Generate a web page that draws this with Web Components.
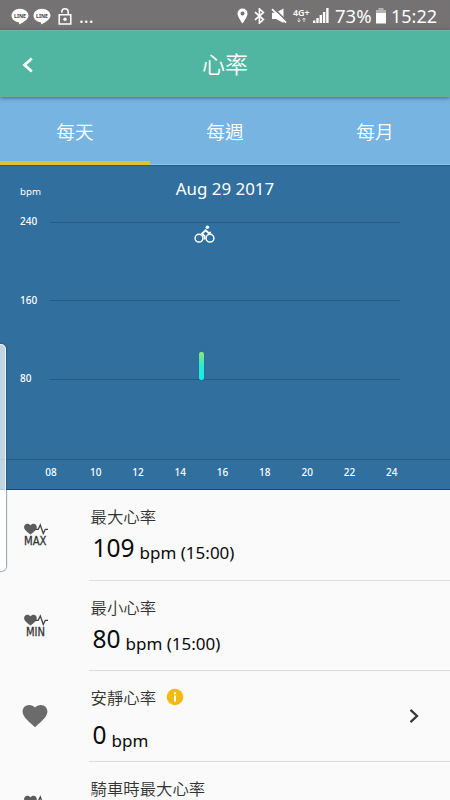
<!DOCTYPE html>
<html lang="zh-Hant">
<head>
<meta charset="utf-8">
<title>心率</title>
<style>
html,body{margin:0;padding:0}
body{width:450px;height:800px;overflow:hidden;background:#fafafa;font-family:"Noto Sans","Noto Sans CJK TC",sans-serif;color:#111}
</style>
</head>
<body>
<heart-app></heart-app>
<script>
const define = (name, html) => customElements.define(name, class extends HTMLElement {
  connectedCallback() {
    if (this.shadowRoot) return;
    this.attachShadow({mode: 'open'}).innerHTML = typeof html === 'function' ? html(this) : html;
  }
});

const line = `<svg width="18" height="17" viewBox="0 0 18 17"><path d="M9 .7C4.300.7.5 3.800.5 7.500c0 3.400 3 6.200 7.100 6.700.7.200.6.600.5 2.300 3.500-1.700 9.400-5 9.400-9C17.500 3.800 13.700.7 9 .7z" fill="#fff"/><text x="3" y="9.600" font-size="5.600" font-weight="700" textLength="12" lengthAdjust="spacingAndGlyphs" fill="#444">LINE</text></svg>`;

define('status-bar', `<style>
:host{display:flex;box-sizing:border-box;height:30px;align-items:center;padding:2px 14px 0 11px;background:#747272;color:#fff}
svg{display:block;flex:none}
.left{display:flex;align-items:center;gap:4px;flex:1}
.dots{font-size:18px;line-height:24px;margin-left:3px}
.right{display:flex;align-items:center}
.txt{font-size:18px;line-height:26px;white-space:nowrap;flex:none}
</style>
<div class="left">${line}${line}
<svg width="14" height="17" viewBox="0 0 14 17" style="margin-left:3px"><path d="M1.200 6.700h11.600v9.200H1.200zM3.800 4.800V4a3.200 3.200 0 0 1 6.400 0v2.600" fill="none" stroke="#fff" stroke-width="1.500"/><circle cx="7" cy="11.200" r="1.700" fill="#fff"/></svg>
<span class="dots">...</span></div>
<div class="right">
<svg width="11" height="16" viewBox="0 0 11 16"><path fill-rule="evenodd" d="M5.500.5A5 5 0 0 0 .5 5.500C.5 9 5.500 15.500 5.500 15.500s5-6.500 5-10a5 5 0 0 0-5-5zm0 3a2 2 0 1 1 0 4 2 2 0 0 1 0-4z" fill="#fff"/></svg>
<svg width="11" height="16" viewBox="0 0 11 16" style="margin-left:6px"><path d="M1 4.200l8.400 7.400-4 3.500V.9l4 3.500L1 11.800" fill="none" stroke="#fff" stroke-width="1.600"/></svg>
<svg width="16" height="16" viewBox="0 0 16 16" style="margin-left:6px"><path d="M1 4.800h4L12.500.5v14.500L5 11H1z" fill="#fff"/><path d="M2.500 0l13 13" stroke="#747272" stroke-width="1.600"/><path d="M1 1.200l14 13.500" stroke="#fff" stroke-width="1.600"/></svg>
<svg width="17" height="17" viewBox="0 0 17 17" style="margin-left:6px"><text x="0" y="8" font-size="8.500" font-weight="600" textLength="16.500" lengthAdjust="spacingAndGlyphs" fill="#fff">4G+</text><path d="M6 10v4M4.500 12.500L6 14l1.500-1.500M11 14v-4M9.500 11.500L11 10l1.500 1.500" fill="none" stroke="#ddd" stroke-width="1"/></svg>
<svg width="16" height="16" viewBox="0 0 16 16" style="margin-left:3px"><path d="M0 12.500h2.400V15H0zM3.300 10h2.400v5H3.300zM6.600 7H9v8H6.600zM9.900 4h2.400v11H9.900zM13.200 0h2.400v15h-2.400z" fill="#fff"/></svg>
<span class="txt" style="margin-left:6px;width:37px;font-size:18.500px">73%</span>
<svg width="10" height="16" viewBox="0 0 10 16" style="margin-left:4px"><path d="M2.500 0h5v2H10v4H0V2h2.500z" fill="#b5b4b4"/><path d="M0 5h10v10.500H0z" fill="#fff"/></svg>
<span class="txt" style="margin-left:5px;width:45px">15:22</span>
</div>`);

define('app-bar', `<style>
:host{display:grid;grid-template-columns:56px 1fr 56px;align-items:center;box-sizing:border-box;height:67px;background:#50b5a1;color:#fff;border-top:1px solid #69b9a9;border-bottom:1px solid #68ad96;box-shadow:0 1px 4px rgba(30,65,90,.65);position:relative;z-index:1}
svg{display:block;margin-left:21px;margin-top:3px}
h1{margin:0 0 2px;font:350 23px/34px "Noto Sans CJK TC",sans-serif;text-align:center}
</style><svg width="14" height="18" viewBox="0 0 14 18"><path d="M10.800 2.500L3.600 9l7.200 6.500" fill="none" stroke="#fff" stroke-width="2.800"/></svg><h1><slot></slot></h1>`);

define('tab-bar', `<style>:host{display:grid;grid-template-columns:repeat(3,1fr);height:68px;background:#77b4e1}</style><slot></slot>`);
define('tab-item', `<style>
:host{display:flex;box-sizing:border-box;align-items:center;justify-content:center;height:68px;padding-top:1px;border-bottom:1px solid #85cbed;color:#fff;font:350 18.700px/28px "Noto Sans CJK TC",sans-serif}
:host([active]){border-bottom:4px solid #e6bd35;padding-top:4px}
</style><slot></slot>`);

define('grid-line', el => `<style>
:host{display:grid;grid-template-columns:30px 350px;height:20px;align-items:center;padding-left:20px}
span{font-size:10px;line-height:14px;font-weight:500;margin-top:-2px}
i{height:1px;background:#235b86}
</style><span>${el.getAttribute('value')}</span><i></i>`);

define('heart-chart', `<style>
:host{display:flex;flex-direction:column;box-sizing:border-box;height:325px;background:#316f9e;color:#fff;border-top:1px solid #255c8b;border-bottom:1px solid #17466c;position:relative}
.head{display:grid;grid-template-columns:60px 1fr 60px;height:46px;align-items:center}
.head small{font-size:9.700px;line-height:14px;padding:5px 0 0 20px}
.head b{font-weight:400;font-size:16.900px;line-height:24px;text-align:center}
.lines{display:flex;flex-direction:column;gap:58.500px;height:247px}
.axis{display:grid;grid-template-columns:47px repeat(8,42.300px);padding-left:27.500px;border-top:1px solid #235b86;font-size:10px;line-height:14px;padding-top:5px;text-align:center;font-weight:500}
.bike{position:absolute;left:194px;top:59px}
.bar{position:absolute;left:199px;top:186px;width:5px;height:28px;border-radius:2px;background:linear-gradient(#8fe77d,#2debc5 45%,#11eff0);box-shadow:0 0 1px #144b78}
</style>
<div class="head"><small>bpm</small><b>Aug 29 2017</b></div>
<div class="lines"><grid-line value="240"></grid-line><grid-line value="160"></grid-line><grid-line value="80"></grid-line></div>
<div class="axis"><span>08</span><span>10</span><span>12</span><span>14</span><span>16</span><span>18</span><span>20</span><span>22</span><span>24</span></div>
<svg class="bike" width="21" height="19" viewBox="0 0 21 19"><g fill="none" stroke="#fff"><circle cx="5" cy="13.200" r="3.900" stroke-width="1.500"/><circle cx="16" cy="13.200" r="3.900" stroke-width="1.500"/><path d="M10.600 14.500v-3.300L8 8.600l3.700-3.400 2.600 2.600h2.800" stroke-width="1.900" stroke-linejoin="round"/></g><circle cx="13.400" cy="2.200" r="1.800" fill="#fff"/></svg>
<div class="bar"></div>`);

const heart = `<svg width="26" height="24" viewBox="0 0 26 24"><path d="M13 23.200l-1.800-1.600C4.800 15.800.6 12 .6 7.400.6 3.700 3.500.9 7.200.9c2.200 0 4.400 1 5.800 2.700C14.400 1.900 16.600.9 18.800.9c3.700 0 6.600 2.800 6.600 6.500 0 4.600-4.200 8.400-10.600 14.200z" fill="#6b6b6b"/></svg>`;
const pulse = label => `<svg width="26" height="24" viewBox="0 0 26 24"><path d="M7.500 11.600C3.700 8.400 1.100 6.700 1.100 3.900 1.100 2 2.600.7 4.400.7c1.200 0 2.400.6 3.100 1.600C8.200 1.300 9.400.7 10.600.7c1.800 0 3.200 1.300 3.200 3.200 0 2.800-2.500 4.500-6.300 7.700z" fill="#5c5c5c"/><path d="M12 6.300h3.200L17.300 2l3 8.500 2-4.200H25" fill="none" stroke="#444" stroke-width="1.300"/>${label ? `<text x="${label === 'MAX' ? 1 : 3}" y="22.300" font-family="DejaVu Sans" font-size="11.500" stroke="#333" stroke-width=".3" textLength="${label === 'MAX' ? 22.500 : 19}" lengthAdjust="spacingAndGlyphs" fill="#333">${label}</text>` : ''}</svg>`;

define('stat-row', el => {
  const a = n => el.getAttribute(n) || '';
  const icon = a('icon'), info = el.hasAttribute('info');
  return `<style>
:host{display:grid;grid-template-columns:89px 1fr;height:90.700px}
.icon{padding:${icon === 'heart' ? '33px 0 0 22px' : '33px 0 0 23px'}}
svg{display:block}
.body{box-sizing:border-box;height:90.700px;border-bottom:1px solid #dedede;display:grid;grid-template-columns:1fr auto;align-items:center;padding:0 30px 0 1.500px}
.copy{align-self:start;padding-top:14px}
.label{display:flex;align-items:center;gap:10px;height:24px;font:350 16.400px/24px "Noto Sans CJK TC",sans-serif;color:#333}
.label svg{margin-top:-1px}
.value{display:flex;align-items:baseline;height:38px;padding:${info ? '7px' : '1px'} 0 0 2px;white-space:nowrap;color:#0b0b0b}
.value b{font-weight:400;font-size:24.500px;line-height:38px}
.value span{font-size:17px;line-height:24px;margin-left:5px;position:relative;top:${info ? 3 : 2}px}
</style>
<div class="icon">${icon === 'heart' ? heart : pulse(icon === 'pulse' ? '' : icon)}</div>
<div class="body"><div class="copy">
<div class="label"><slot></slot>${info ? '<svg width="18" height="18" viewBox="0 0 18 18"><circle cx="9" cy="9" r="8.300" fill="#f3ba13"/><path d="M8 7.400h2v6H8zM8 4.300h2v2H8z" fill="#fff"/></svg>' : ''}</div>
${a('value') ? `<div class="value"><b>${a('value')}</b><span>${a('unit')}</span></div>` : ''}</div>
${info ? '<svg width="12" height="16" viewBox="0 0 12 16"><path d="M2.500 1.800L9 8l-6.500 6.200" fill="none" stroke="#383838" stroke-width="2.300"/></svg>' : ''}</div>`;
});

define('edge-handle', `<style>:host{position:absolute;box-sizing:border-box;left:-6px;top:344px;width:12px;height:227px;border-radius:5px;z-index:3;background:rgba(255,255,255,.7);border:1px solid rgba(255,255,255,.8);box-shadow:0 0 1px 1px rgba(50,70,85,.5)}</style>`);

define('heart-app', `<style>
:host{display:flex;flex-direction:column;width:450px;height:800px;overflow:hidden;position:relative;background:#fafafa}
</style>
<style>status-bar,app-bar,tab-bar,heart-chart,stat-row{flex:none}</style>
<status-bar></status-bar>
<app-bar>心率</app-bar>
<tab-bar><tab-item active>每天</tab-item><tab-item>每週</tab-item><tab-item>每月</tab-item></tab-bar>
<heart-chart></heart-chart>
<stat-row icon="MAX" value="109" unit="bpm (15:00)">最大心率</stat-row>
<stat-row icon="MIN" value="80" unit="bpm (15:00)">最小心率</stat-row>
<stat-row icon="heart" value="0" unit="bpm" info>安靜心率</stat-row>
<stat-row icon="pulse">騎車時最大心率</stat-row>
<edge-handle></edge-handle>`);
</script>
</body>
</html>
